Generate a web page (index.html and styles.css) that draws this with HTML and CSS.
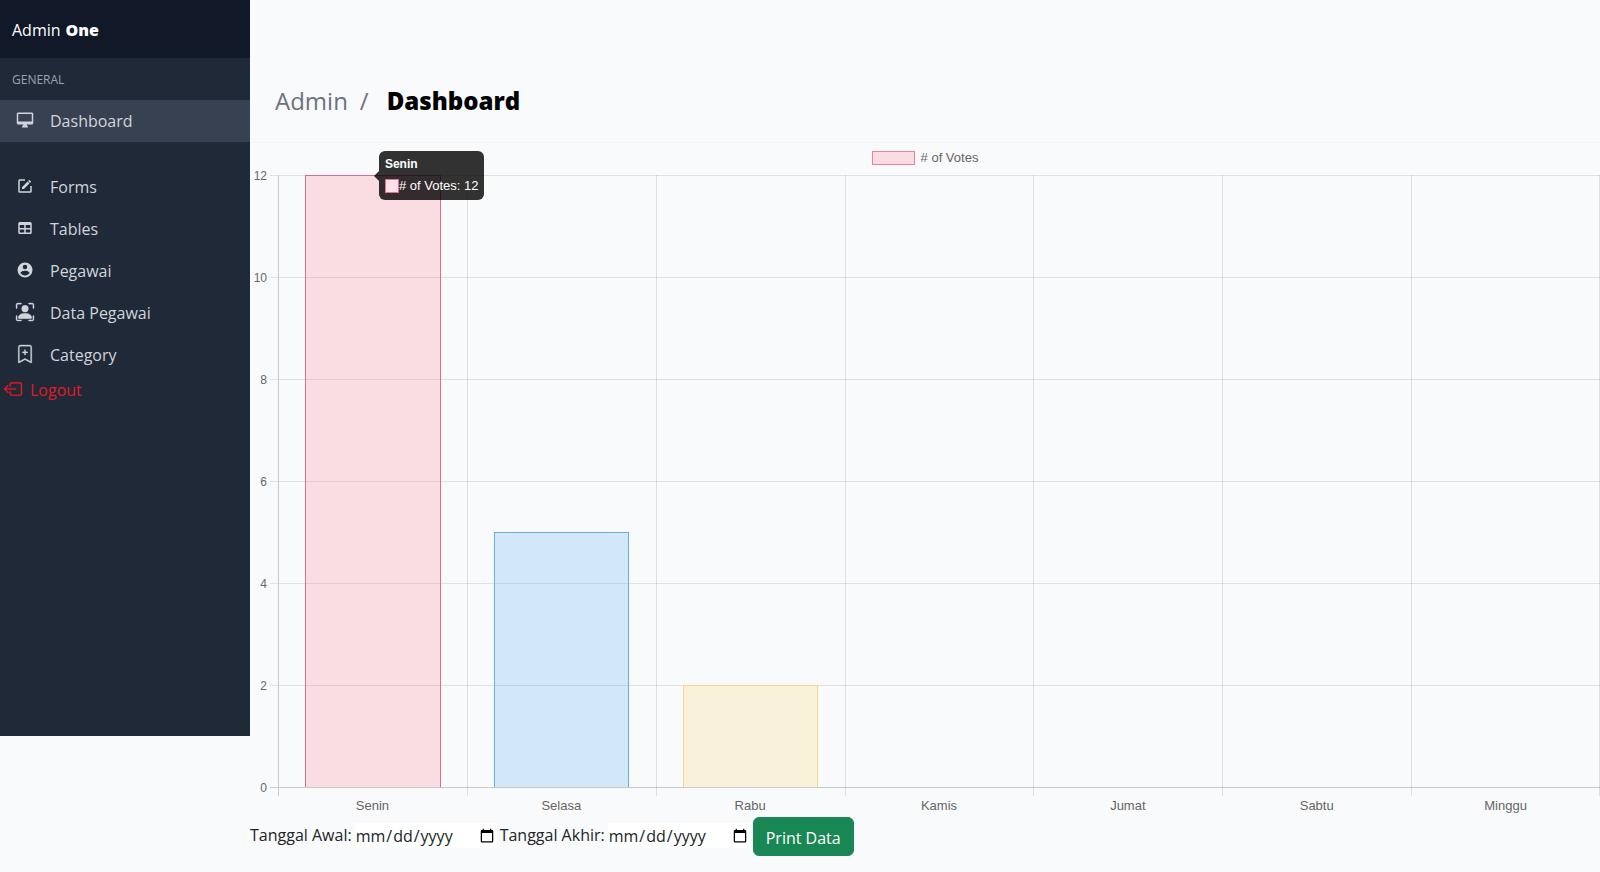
FILE: index.html
```html
<!DOCTYPE html>
<html lang="id">
<head>
<meta charset="utf-8">
<meta name="viewport" content="width=device-width, initial-scale=1">
<title>Admin One - Dashboard</title>
<link rel="stylesheet" href="styles.css">
</head>
<body>
<aside class="sidebar">
  <div class="brand">Admin <b>One</b></div>
  <p class="menu-label">General</p>
  <nav class="menu">
    <a class="menu-item active" href="#">
      <svg class="icon" viewBox="0 0 24 24"><path d="M21,14H3V4H21M21,2H3C1.89,2 1,2.89 1,4V16A2,2 0 0,0 3,18H10L8,21V22H16V21L14,18H21A2,2 0 0,0 23,16V4C23,2.89 22.1,2 21,2Z"/></svg>
      <span>Dashboard</span></a>
    <a class="menu-item first" href="#">
      <svg class="icon" viewBox="0 0 24 24"><path d="M5,3C3.89,3 3,3.89 3,5V19A2,2 0 0,0 5,21H19A2,2 0 0,0 21,19V12H19V19H5V5H12V3H5M17.78,4C17.61,4 17.43,4.07 17.3,4.2L16.08,5.41L18.58,7.91L19.8,6.7C20.06,6.44 20.06,6 19.8,5.75L18.25,4.2C18.12,4.07 17.95,4 17.78,4M15.37,6.12L8,13.5V16H10.5L17.87,8.62L15.37,6.12Z"/></svg>
      <span>Forms</span></a>
    <a class="menu-item" href="#">
      <svg class="icon" viewBox="0 0 24 24"><path d="M5,4H19A2,2 0 0,1 21,6V18A2,2 0 0,1 19,20H5A2,2 0 0,1 3,18V6A2,2 0 0,1 5,4M5,8V12H11V8H5M13,8V12H19V8H13M5,14V18H11V14H5M13,14V18H19V14H13Z"/></svg>
      <span>Tables</span></a>
    <a class="menu-item" href="#">
      <svg class="icon" viewBox="0 0 24 24"><path d="M12,19.2C9.5,19.2 7.29,17.92 6,16C6.03,14 10,12.9 12,12.9C14,12.9 17.97,14 18,16C16.71,17.92 14.5,19.2 12,19.2M12,5A3,3 0 0,1 15,8A3,3 0 0,1 12,11A3,3 0 0,1 9,8A3,3 0 0,1 12,5M12,2A10,10 0 0,0 2,12A10,10 0 0,0 12,22A10,10 0 0,0 22,12C22,6.47 17.5,2 12,2Z"/></svg>
      <span>Pegawai</span></a>
    <a class="menu-item" href="#">
      <svg class="icon bold" viewBox="0 0 16 16"><path d="M1.5 1a.5.5 0 0 0-.5.5v3a.5.5 0 0 1-1 0v-3A1.5 1.5 0 0 1 1.5 0h3a.5.5 0 0 1 0 1zM11 .5a.5.5 0 0 1 .5-.5h3A1.5 1.5 0 0 1 16 1.5v3a.5.5 0 0 1-1 0v-3a.5.5 0 0 0-.5-.5h-3a.5.5 0 0 1-.5-.5M.5 11a.5.5 0 0 1 .5.5v3a.5.5 0 0 0 .5.5h3a.5.5 0 0 1 0 1h-3A1.5 1.5 0 0 1 0 14.5v-3a.5.5 0 0 1 .5-.5m15 0a.5.5 0 0 1 .5.5v3a1.5 1.5 0 0 1-1.5 1.5h-3a.5.5 0 0 1 0-1h3a.5.5 0 0 0 .5-.5v-3a.5.5 0 0 1 .5-.5"/><path d="M3 14s-1 0-1-1 1-4 6-4 6 3 6 4-1 1-1 1zm8-9a3 3 0 1 1-6 0 3 3 0 0 1 6 0"/></svg>
      <span>Data Pegawai</span></a>
    <a class="menu-item" href="#">
      <svg class="icon bold" viewBox="0 0 16 16"><path d="M2 2a2 2 0 0 1 2-2h8a2 2 0 0 1 2 2v13.5a.5.5 0 0 1-.777.416L8 13.101l-5.223 2.815A.5.5 0 0 1 2 15.5zm2-1a1 1 0 0 0-1 1v12.566l4.723-2.482a.5.5 0 0 1 .554 0L13 14.566V2a1 1 0 0 0-1-1z"/><path d="M8 4a.5.5 0 0 1 .5.5V6H10a.5.5 0 0 1 0 1H8.5v1.5a.5.5 0 0 1-1 0V7H6a.5.5 0 0 1 0-1h1.5V4.5A.5.5 0 0 1 8 4"/></svg>
      <span>Category</span></a>
    <a class="logout" href="#">
      <svg class="icon bold" viewBox="0 0 16 16"><path d="M6 12.5a.5.5 0 0 0 .5.5h8a.5.5 0 0 0 .5-.5v-9a.5.5 0 0 0-.5-.5h-8a.5.5 0 0 0-.5.5v2a.5.5 0 0 1-1 0v-2A1.5 1.5 0 0 1 6.5 2h8A1.5 1.5 0 0 1 16 3.5v9a1.5 1.5 0 0 1-1.5 1.5h-8A1.5 1.5 0 0 1 5 12.5v-2a.5.5 0 0 1 1 0z"/><path d="M.146 8.354a.5.5 0 0 1 0-.708l3-3a.5.5 0 1 1 .708.708L1.707 7.5H10.5a.5.5 0 0 1 0 1H1.707l2.147 2.146a.5.5 0 0 1-.708.708z"/></svg>
      <span>Logout</span></a>
  </nav>
</aside>
<main class="main">
  <header class="title-bar">
    <span class="crumb">Admin</span><span class="crumb slash">/</span><h1 class="title">Dashboard</h1>
  </header>
  <section class="chart">
    <div class="legend"><span class="legend-box"></span><span># of Votes</span></div>
    <ul class="y-axis"><li>12</li><li>10</li><li>8</li><li>6</li><li>4</li><li>2</li><li>0</li></ul>
    <div class="lines"><i></i><i></i><i></i><i></i><i></i><i></i><i></i></div>
    <div class="plot">
      <div class="col"><div class="bar red" style="height:100%">
        <div class="tooltip"><b>Senin</b><span class="tooltip-row"><i class="swatch"></i># of Votes: 12</span></div>
      </div></div>
      <div class="col"><div class="bar blue" style="height:41.667%"></div></div>
      <div class="col"><div class="bar yellow" style="height:16.667%"></div></div>
      <div class="col"></div>
      <div class="col"></div>
      <div class="col"></div>
      <div class="col"></div>
    </div>
    <div class="x-axis"><span>Senin</span><span>Selasa</span><span>Rabu</span><span>Kamis</span><span>Jumat</span><span>Sabtu</span><span>Minggu</span></div>
  </section>
  <form class="filter">
    <label for="awal">Tanggal Awal:</label>
    <input class="date" type="date" id="awal">
    <label for="akhir">Tanggal Akhir:</label>
    <input class="date" type="date" id="akhir">
    <button class="print" type="button">Print Data</button>
  </form>
</main>
</body>
</html>
```
FILE: styles.css
```css
* { box-sizing: border-box; }
body {
  margin: 0;
  display: flex;
  align-items: flex-start;
  min-height: 100vh;
  background: #f9fafc;
  color: #212529;
  font: 16px/24px "Segoe UI", "Open Sans", "Noto Sans", sans-serif;
}
h1, p, ul { margin: 0; padding: 0; list-style: none; }

.sidebar {
  flex: 0 0 250px;
  min-height: calc(100vh - 136px);
  background: #1f2937;
  color: #d1d5db;
}
.brand {
  display: flex;
  align-items: center;
  gap: 5px;
  height: 58px;
  padding: 2px 12px 0;
  background: #111827;
  color: #fff;
}
.brand b { font-weight: 800; }
.menu-label {
  padding: 14px 12px 12px;
  color: #9ca3af;
  font-size: 12px;
  line-height: 16px;
  text-transform: uppercase;
}
.menu-item, .logout {
  display: flex;
  align-items: center;
  color: inherit;
  text-decoration: none;
}
.menu-item { gap: 16px; height: 42px; padding: 0 16px; }
.menu-item.active { background: #374151; }
.menu-item.first { margin-top: 24px; }
.icon { width: 18px; height: 18px; margin-bottom: 2px; fill: currentColor; overflow: visible; }
.icon.bold { stroke: currentColor; stroke-width: .3; }
.logout { gap: 8px; padding: 2px 4px; color: #e01b26; }

.main { flex: 1; min-width: 0; }
.title-bar {
  display: flex;
  align-items: center;
  margin-top: 58px;
  height: 85px;
  padding: 2px 25px 0;
  border-bottom: 1px solid #f3f4f6;
  font-size: 24px;
  line-height: 32px;
}
.crumb { color: #6b7280; }
.slash { padding: 0 18px 0 12px; }
.title { color: #000; font-size: 24px; font-weight: 800; }

.chart {
  display: grid;
  grid-template-columns: 28px 1fr;
  grid-template-rows: 32px calc(100vh - 259px) 29px;
  color: #666;
  font: 13px/14px Arial, "Liberation Sans", sans-serif;
}
.legend {
  grid-column: 1 / 3;
  display: flex;
  justify-content: center;
  align-items: center;
  gap: 6px;
  padding-bottom: 2px;
}
.legend-box {
  width: 43px;
  height: 14px;
  border: 1px solid #ee819b;
  background: #fbdce3;
}
.y-axis, .lines {
  display: flex;
  flex-direction: column;
  justify-content: space-between;
}
.y-axis { grid-area: 2 / 1; padding-right: 11px; font-size: 12px; }
.y-axis li { display: flex; align-items: center; justify-content: flex-end; height: 1px; }
.lines { grid-area: 2 / 2; margin-left: -8px; }
.lines i { height: 1px; background: #e0e1e3; }
.lines i:last-child { background: #c8c9cb; }
.plot, .x-axis { display: grid; grid-template-columns: repeat(7, 1fr); }
.plot { grid-area: 2 / 2; margin-bottom: -8px; }
.col {
  display: flex;
  justify-content: center;
  align-items: flex-end;
  padding-bottom: 9px;
  border-left: 1px solid rgba(0, 0, 0, .1);
}
.col:first-child { border-color: #c8c9cb; }
.col:last-child { border-right: 1px solid rgba(0, 0, 0, .1); }
.bar { position: relative; width: 72%; border: 1px solid; border-bottom: 0; }
.red { background: rgba(255, 99, 132, .2); border-color: #d57188; }
.blue { background: rgba(54, 162, 235, .2); border-color: #64b0e0; }
.yellow { background: rgba(255, 206, 86, .2); border-color: #fad588; }
.tooltip {
  position: absolute;
  top: -25px;
  left: calc(50% + 6px);
  z-index: 1;
  width: max-content;
  padding: 6px 6px 7px;
  border-radius: 6px;
  background: rgba(0, 0, 0, .8);
  color: #fff;
  line-height: 14px;
}
.tooltip::before {
  content: "";
  position: absolute;
  left: -5px;
  top: 20px;
  border: 5px solid transparent;
  border-left: 0;
  border-right-color: rgba(0, 0, 0, .8);
}
.tooltip b { display: block; margin-bottom: 8px; font-size: 12px; }
.tooltip-row { display: flex; align-items: center; }
.swatch { width: 14px; height: 14px; border: 1px solid #e2738c; background: #ffe0e6; }
.x-axis { grid-area: 3 / 2; align-items: center; padding-top: 6px; text-align: center; }

.filter { display: flex; align-items: center; gap: 3px; }
.filter label { margin-bottom: 3px; }
.date {
  width: 142px;
  height: 25px;
  margin: 0 0 2px;
  padding: 0;
  border: 0;
  background: #fff;
  color: #212529;
  font: inherit;
}
.print {
  height: 39px;
  padding: 2px 12px 0;
  border: 1px solid #198754;
  border-radius: 6px;
  background: #198754;
  color: #fff;
  font: inherit;
}
```
